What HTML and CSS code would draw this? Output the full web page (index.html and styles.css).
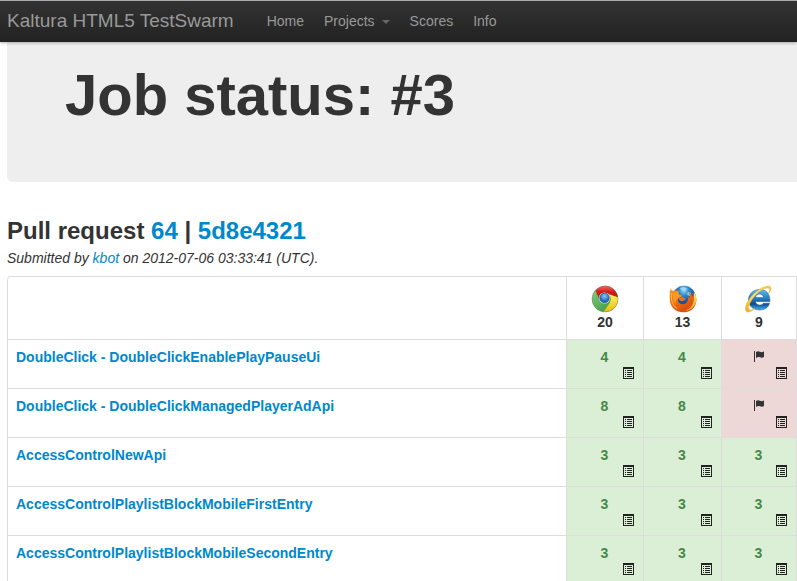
FILE: index.html
```html
<!DOCTYPE html>
<html lang="en">
<head>
<meta charset="utf-8">
<title>Job status: #3 - Kaltura HTML5 TestSwarm</title>
<link rel="stylesheet" href="styles.css">
</head>
<body>
<svg class="defs" width="0" height="0" aria-hidden="true">
  <symbol id="list" viewBox="0 0 11 12">
    <path fill="#222" fill-rule="evenodd" d="M0 0h11v12H0zM1 2v9h9V2z"/>
    <path fill="#222" d="M2 3h1v1H2zM4 3h5v1H4zM2 5h1v1H2zM4 5h5v1H4zM2 7h1v1H2zM4 7h5v1H4zM2 9h1v1H2zM4 9h5v1H4z"/>
  </symbol>
  <symbol id="flag" viewBox="0 0 10 11">
    <path fill="#333" d="M0 0h1v11H0zM2 1C3.500 0 4.500 0 6 .8S8.500 1 10 .5V6C8.500 6.800 7.500 6.800 6 6.200S3.500 6 2 7z"/>
  </symbol>
</svg>
<header class="navbar">
  <a class="brand" href="#">Kaltura HTML5 TestSwarm</a>
  <nav class="nav">
    <a href="#">Home</a>
    <a href="#">Projects<span class="caret"></span></a>
    <a href="#">Scores</a>
    <a href="#">Info</a>
  </nav>
</header>
<main class="content">
  <div class="hero"><h1>Job status: #3</h1></div>
  <h2>Pull request <a href="#">64</a> | <a href="#">5d8e4321</a></h2>
  <p class="submitted">Submitted by <a href="#">kbot</a> on 2012-07-06 03:33:41 (UTC).</p>
  <table class="results">
    <colgroup><col><col class="col-chrome"><col class="col-firefox"><col class="col-ie"></colgroup>
    <thead>
      <tr>
        <td></td>
        <th scope="col">
          <svg class="browser" viewBox="0 0 28 28" role="img" aria-label="Chrome">
            <defs>
              <linearGradient id="cr" x2="0" y2="1"><stop stop-color="#f0706a"/><stop offset=".45" stop-color="#d4201c"/><stop offset="1" stop-color="#b81410"/></linearGradient>
              <linearGradient id="cg" x2="1" y2="1"><stop stop-color="#8fce80"/><stop offset="1" stop-color="#2c9136"/></linearGradient>
              <linearGradient id="cy" x2="0" y2="1"><stop stop-color="#fff263"/><stop offset="1" stop-color="#e9bd0c"/></linearGradient>
              <radialGradient id="cb" cy=".3"><stop stop-color="#8cc8f8"/><stop offset="1" stop-color="#246ec0"/></radialGradient>
            </defs>
            <circle cx="14" cy="14" r="13" fill="url(#cg)"/>
            <path fill="url(#cr)" d="M4.500 5.500C10-1 20-1 24.500 6.500c1.500 2 2.200 4 2.400 6L18 9.500C13 7 8.500 9.500 8 13.500z"/>
            <path fill="url(#cy)" d="M26.900 12.200C28 20 22 27.500 12.500 27l6.500-9.500c1.500-3 .8-6.300-1.200-8.300z"/>
            <circle cx="13.500" cy="13" r="5.600" fill="#dfe9e4"/>
            <circle cx="13.500" cy="13" r="4.700" fill="url(#cb)" stroke="#2b568c" stroke-width=".8"/>
            <circle cx="14" cy="14" r="13" fill="none" stroke="#555" stroke-opacity=".4" stroke-width=".8"/>
          </svg>
          20
        </th>
        <th scope="col">
          <svg class="browser" viewBox="0 0 28 28" role="img" aria-label="Firefox">
            <defs>
              <radialGradient id="fb" cx=".5" cy=".2"><stop stop-color="#8ee0f8"/><stop offset=".45" stop-color="#2c84c6"/><stop offset="1" stop-color="#1b4f96"/></radialGradient>
              <linearGradient id="fo" x2=".7" y2="1"><stop stop-color="#f79a28"/><stop offset=".5" stop-color="#ee6c14"/><stop offset="1" stop-color="#d2480c"/></linearGradient>
              <linearGradient id="fy" x2="0" y2="1"><stop stop-color="#fff06a"/><stop offset="1" stop-color="#f49a1a"/></linearGradient>
            </defs>
            <circle cx="15" cy="12.500" r="11.800" fill="url(#fb)"/>
            <path fill="#a9dcf0" opacity=".8" d="M11 3c3-2 6-1 7 1l-3 2-3-1zM19 7l3 1-1 3-3-1z"/>
            <path fill="url(#fo)" d="M1.500 3.500C2 5 3 5.800 5 6c2-.8 4-.5 5 0-.8 1-1 2-.8 3l3.800 1-.4 1.700-3.500 1.600c-.8 3.700 1.900 6.400 5.400 5.900 3.500-.8 5-3.900 4.500-7.200l1.800 1.300c0-2.600-.3-4-1.600-6 2.500 1 4 2.700 4.700 5l.8-4.800c2.500 3 3.300 6.500 2.300 10.500C25.500 24 20.500 27.300 14 27.300 6.500 27.300 1 22 .8 14.800.6 10 .5 6.500 1.500 3.500z"/>
            <path fill="url(#fy)" d="M25.200 7.500c2.300 3 2.800 7 1.500 10.500-2 5-7 8.300-12.200 8.200 5-1.200 9.300-4.700 10.200-10.200z"/>
            <path fill="none" stroke="#ffbd43" stroke-width="1" d="M3 8c-1.500 6 0 12 5 15.500"/>
            <path fill="#f9a52e" d="M4 9c2-2 4-2.500 6-1.500-.5 1-.3 1.800 0 2.500l3 .8-3.500 2.300C7 15 6 17 7 20c-3-3-4-7-3-11z" opacity=".7"/>
            <path fill="#e8701c" d="M9.500 13.500l3.500-1.500c1.500 0 2.500.8 3.500 2-1 1.800-3 2.500-5 2z"/>
          </svg>
          13
        </th>
        <th scope="col">
          <svg class="browser" viewBox="0 0 28 28" role="img" aria-label="Internet Explorer">
            <defs>
              <linearGradient id="ib" x2="0" y2="1"><stop stop-color="#64bceb"/><stop offset=".4" stop-color="#2484cd"/><stop offset=".7" stop-color="#11498e"/><stop offset="1" stop-color="#45b4eb"/></linearGradient>
              <linearGradient id="iy" x1="1" x2="0" y2="1"><stop stop-color="#f7c83a"/><stop offset=".5" stop-color="#ffdf70"/><stop offset="1" stop-color="#eeae1e"/></linearGradient>
            </defs>
            <path fill="url(#ib)" fill-rule="evenodd" stroke="#175796" stroke-width=".5" d="M25 16.500H10.500c.2 2.200 1.900 3.500 4.200 3.500 1.800 0 3-.6 3.800-1.800h6C23.300 22.500 20 25 14.700 25 8 25 3.500 20.800 3.500 15S8 4.500 14.700 4.500 25 8.500 25 16.500zM10.500 12.500h8c-.2-2.200-1.800-3.500-3.900-3.500s-3.800 1.300-4.100 3.500z"/>
            <path fill="url(#iy)" stroke="#dda725" stroke-width=".4" d="M23.500 8.500c1.600-3.300 1.500-5.500-.8-5.500C18 3 11.500 8.200 7.500 14 3.500 20 2.500 24.500 5 25c1.300.2 3-.5 5-1.800-3.500 3.300-7 4.700-8.500 3.300C-1 24 1 18 6 11.800 12 4.500 20 .2 24.500 1.300c2.500.8 1.800 4.200-1 7.200z"/>
          </svg>
          9
        </th>
      </tr>
    </thead>
    <tbody>
      <tr>
        <th scope="row"><a href="#">DoubleClick - DoubleClickEnablePlayPauseUi</a></th>
        <td class="pass"><span class="result">4</span><a class="log" href="#" aria-label="Run results"><svg><use href="#list"/></svg></a></td>
        <td class="pass"><span class="result">4</span><a class="log" href="#" aria-label="Run results"><svg><use href="#list"/></svg></a></td>
        <td class="fail"><span class="result"><svg class="flag"><use href="#flag"/></svg></span><a class="log" href="#" aria-label="Run results"><svg><use href="#list"/></svg></a></td>
      </tr>
      <tr>
        <th scope="row"><a href="#">DoubleClick - DoubleClickManagedPlayerAdApi</a></th>
        <td class="pass"><span class="result">8</span><a class="log" href="#" aria-label="Run results"><svg><use href="#list"/></svg></a></td>
        <td class="pass"><span class="result">8</span><a class="log" href="#" aria-label="Run results"><svg><use href="#list"/></svg></a></td>
        <td class="fail"><span class="result"><svg class="flag"><use href="#flag"/></svg></span><a class="log" href="#" aria-label="Run results"><svg><use href="#list"/></svg></a></td>
      </tr>
      <tr>
        <th scope="row"><a href="#">AccessControlNewApi</a></th>
        <td class="pass"><span class="result">3</span><a class="log" href="#" aria-label="Run results"><svg><use href="#list"/></svg></a></td>
        <td class="pass"><span class="result">3</span><a class="log" href="#" aria-label="Run results"><svg><use href="#list"/></svg></a></td>
        <td class="pass"><span class="result">3</span><a class="log" href="#" aria-label="Run results"><svg><use href="#list"/></svg></a></td>
      </tr>
      <tr>
        <th scope="row"><a href="#">AccessControlPlaylistBlockMobileFirstEntry</a></th>
        <td class="pass"><span class="result">3</span><a class="log" href="#" aria-label="Run results"><svg><use href="#list"/></svg></a></td>
        <td class="pass"><span class="result">3</span><a class="log" href="#" aria-label="Run results"><svg><use href="#list"/></svg></a></td>
        <td class="pass"><span class="result">3</span><a class="log" href="#" aria-label="Run results"><svg><use href="#list"/></svg></a></td>
      </tr>
      <tr>
        <th scope="row"><a href="#">AccessControlPlaylistBlockMobileSecondEntry</a></th>
        <td class="pass"><span class="result">3</span><a class="log" href="#" aria-label="Run results"><svg><use href="#list"/></svg></a></td>
        <td class="pass"><span class="result">3</span><a class="log" href="#" aria-label="Run results"><svg><use href="#list"/></svg></a></td>
        <td class="pass"><span class="result">3</span><a class="log" href="#" aria-label="Run results"><svg><use href="#list"/></svg></a></td>
      </tr>
    </tbody>
  </table>
</main>
</body>
</html>
```
FILE: styles.css
```css
* { box-sizing: border-box; }

body {
  margin: 0;
  background: #fff;
  color: #333;
  font: 14px/18px "Liberation Sans", Arial, sans-serif;
}

a { color: #08c; text-decoration: none; }

.defs { display: none; }

.navbar {
  position: relative;
  display: flex;
  align-items: center;
  gap: 33px;
  height: 42px;
  padding: 0 0 2px 7px;
  border-top: 1px solid #aaa;
  background: linear-gradient(#333, #222);
  box-shadow: 0 1px 3px rgba(0, 0, 0, .3);
}

.navbar a { color: #999; }
.navbar .brand { font-size: 19px; }

.nav { display: flex; gap: 20px; }

.caret {
  display: inline-block;
  margin-left: 7px;
  border: 4px solid transparent;
  border-top-color: #666;
  border-bottom: 0;
  vertical-align: middle;
}

.content { padding-left: 7px; }

.hero {
  padding: 24px 58px 58px;
  border-radius: 0 0 0 6px;
  background: #eee;
}

h1 {
  margin: 0;
  font-size: 58px;
  line-height: 58px;
}

h2 {
  margin: 31px 0 0;
  font-size: 24px;
  line-height: 36px;
}

.submitted { margin: 0 0 9px; font-style: italic; }

.results {
  width: 100%;
  table-layout: fixed;
  border-spacing: 0;
  border: solid #ddd;
  border-width: 1px 1px 0 0;
  border-top-left-radius: 4px;
}

.col-chrome { width: 77px; }
.col-firefox { width: 78px; }
.col-ie { width: 75px; }

.results td,
.results th {
  padding: 8px;
  border-left: 1px solid #ddd;
  vertical-align: top;
  font-weight: bold;
  text-align: center;
}

.results thead td { border-top-left-radius: 4px; }

.results tbody td,
.results tbody th { border-top: 1px solid #ddd; }

.results tbody th { text-align: left; }

.browser { display: block; width: 28px; height: 28px; margin: 0 auto; }

.results tbody td { padding: 8px 9px 9px 8px; }

.pass { background: #dbefd7; color: #468847; }
.fail { background: #eed7d7; }

.result { display: block; height: 18px; }

.flag {
  display: inline-block;
  width: 10px;
  height: 11px;
  vertical-align: baseline;
}

.log { display: block; width: 11px; height: 12px; margin: 1px 0 0 auto; }
.log svg { display: block; width: 11px; height: 12px; }
```
